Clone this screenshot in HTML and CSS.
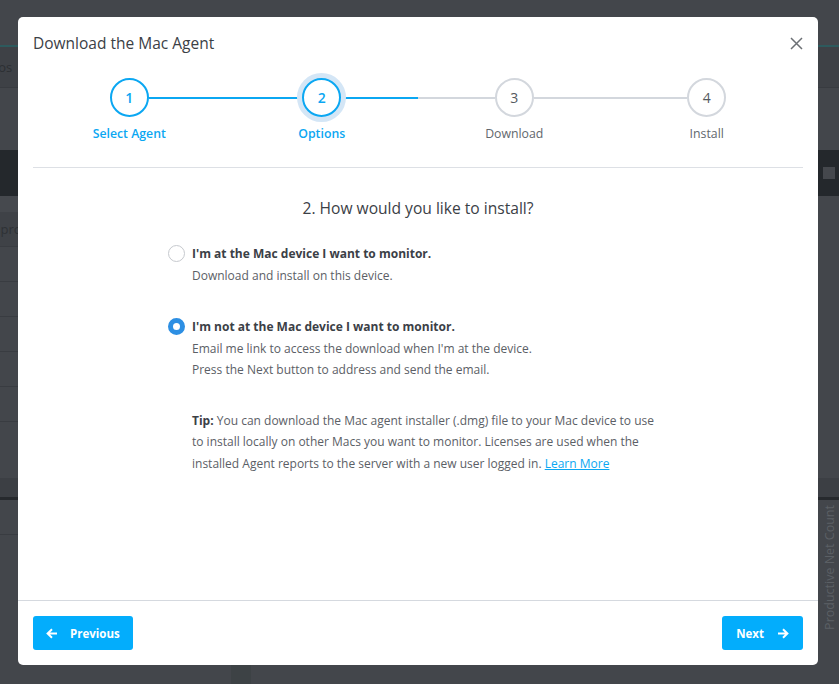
FILE: index.html
```html
<!DOCTYPE html>
<html lang="en">
<head>
<meta charset="UTF-8">
<title>Download the Mac Agent</title>
<link rel="stylesheet" href="styles.css">
</head>
<body>

<!-- page behind the dialog (dimmed) -->
<div class="app">
  <div class="app-header"></div>
  <div class="app-accent"></div>
  <div class="app-tabs"><span class="app-tab">Photos</span></div>
  <div class="app-gap"></div>
  <div class="app-band"><span class="app-band-box"></span></div>
  <div class="app-main">
    <div class="app-list">
      <div class="app-list-top"></div>
      <div class="app-list-title">Unproductive</div>
      <div class="app-row"></div>
      <div class="app-row"></div>
      <div class="app-row"></div>
      <div class="app-row"></div>
      <div class="app-row"></div>
    </div>
    <div class="app-side"></div>
  </div>
  <div class="app-sep"></div>
  <div class="app-foot">
    <div class="app-foot-list"><div class="app-row"></div></div>
    <div class="app-foot-col"></div>
    <div class="app-foot-main"></div>
    <div class="app-foot-axis"><span class="app-axis-label">Productive Net Count</span></div>
  </div>
</div>

<!-- dialog -->
<div class="modal">
  <div class="modal-header">
    <h2 class="modal-title">Download the Mac Agent</h2>
    <button class="modal-close" aria-label="Close">
      <svg width="13" height="13" viewBox="0 0 13 13"><path d="M1 1L12 12M12 1L1 12" stroke="#6c7075" stroke-width="1.5" fill="none"/></svg>
    </button>
  </div>

  <div class="stepper">
    <div class="step active">
      <div class="step-track"><span class="step-line none"></span><span class="step-num">1</span><span class="step-line on"></span></div>
      <div class="step-label">Select Agent</div>
    </div>
    <div class="step active current">
      <div class="step-track"><span class="step-line on"></span><span class="step-num">2</span><span class="step-line on"></span></div>
      <div class="step-label">Options</div>
    </div>
    <div class="step">
      <div class="step-track"><span class="step-line"></span><span class="step-num">3</span><span class="step-line"></span></div>
      <div class="step-label">Download</div>
    </div>
    <div class="step">
      <div class="step-track"><span class="step-line"></span><span class="step-num">4</span><span class="step-line none"></span></div>
      <div class="step-label">Install</div>
    </div>
  </div>

  <div class="modal-body">
    <h3 class="question">2. How would you like to install?</h3>
    <div class="options">
      <label class="option">
        <span class="radio"></span>
        <span class="option-text">
          <span class="option-title">I'm at the Mac device I want to monitor.</span>
          <span class="option-desc">Download and install on this device.</span>
        </span>
      </label>
      <label class="option">
        <span class="radio checked"></span>
        <span class="option-text">
          <span class="option-title">I'm not at the Mac device I want to monitor.</span>
          <span class="option-desc">Email me link to access the download when I'm at the device.</span>
          <span class="option-desc">Press the Next button to address and send the email.</span>
        </span>
      </label>
      <p class="tip"><b>Tip:</b> You can download the Mac agent installer (.dmg) file to your Mac device to use to install locally on other Macs you want to monitor. Licenses are used when the installed Agent reports to the server with a new user logged in. <a href="#">Learn More</a></p>
    </div>
  </div>

  <div class="modal-footer">
    <button class="btn">
      <svg width="12" height="11" viewBox="0 0 12 11"><path d="M11 5.5H1.8M6 1.2L1.6 5.5L6 9.8" stroke="#fff" stroke-width="2" fill="none"/></svg>
      Previous
    </button>
    <button class="btn btn-next">
      Next
      <svg width="12" height="11" viewBox="0 0 12 11"><path d="M1 5.5H10.2M6 1.2L10.4 5.5L6 9.8" stroke="#fff" stroke-width="2" fill="none"/></svg>
    </button>
  </div>
</div>

</body>
</html>
```

FILE: styles.css
```css
body {
  margin: 0;
  background-color: #43464b;
  font-family: "Open Sans", "Liberation Sans", sans-serif;
  overflow: hidden;
}

/* dimmed page behind */
.app {
  width: 839px;
  height: 684px;
  display: flex;
  flex-direction: column;
}

.app-header {
  height: 45px;
}

.app-accent {
  height: 2px;
  background-color: #2d5a5d;
}

.app-tabs {
  height: 40px;
  background-color: #3e4146;
  border-bottom: 1px solid #383b40;
  display: flex;
  align-items: center;
}

.app-tab {
  margin-left: -30px;
  font-size: 13px;
  color: #2c2f33;
}

.app-gap {
  height: 62px;
}

.app-band {
  height: 46px;
  background-color: #24282c;
  display: flex;
  justify-content: flex-end;
  align-items: center;
  padding-right: 4px;
}

.app-band-box {
  width: 12px;
  height: 12px;
  background-color: #45484d;
}

.app-main {
  height: 282px;
  display: flex;
}

.app-list {
  width: 231px;
}

.app-list-top {
  height: 16px;
  background-color: #46494e;
}

.app-list-title {
  height: 34px;
  line-height: 34px;
  background-color: #3f4247;
  font-size: 13px;
  color: #2e3135;
  text-indent: -17px;
  white-space: nowrap;
  overflow: hidden;
  border-bottom: 1px solid #393c41;
}

.app-row {
  height: 34px;
  border-bottom: 1px solid #393c41;
}

.app-side {
  flex: 1;
}

.app-sep {
  height: 19px;
  background-color: #3c3f44;
  border-bottom: 3px solid #26292d;
}

.app-foot {
  flex: 1;
  display: flex;
}

.app-foot-list {
  width: 231px;
}

.app-foot-col {
  width: 20px;
  background-color: #3d4245;
}

.app-foot-main {
  flex: 1;
}

.app-foot-axis {
  width: 21px;
  display: flex;
  align-items: flex-start;
  justify-content: flex-end;
  padding-right: 1px;
}

.app-axis-label {
  writing-mode: vertical-rl;
  transform: rotate(180deg);
  font-size: 12.5px;
  color: #5c6065;
  white-space: nowrap;
  margin-top: 5px;
}

/* dialog */
.modal {
  position: absolute;
  top: 17px;
  left: 18px;
  width: 800px;
  height: 648px;
  background-color: white;
  border-radius: 5px;
  display: flex;
  flex-direction: column;
}

.modal-header {
  display: flex;
  justify-content: space-between;
  align-items: center;
  padding: 15px 15px 0;
}

.modal-title {
  margin: 0;
  font-size: 15.5px;
  line-height: 22px;
  font-weight: 400;
  color: #3b4046;
}

.modal-close {
  border: 0;
  background: none;
  padding: 0;
  display: flex;
  cursor: pointer;
}

.stepper {
  display: grid;
  grid-template-columns: repeat(4, 1fr);
  margin: 24px 15px 0;
  padding-bottom: 24px;
  border-bottom: 1px solid #dde0e5;
}

.step {
  display: flex;
  flex-direction: column;
  align-items: center;
}

.step-track {
  display: flex;
  align-items: center;
  width: 100%;
}

.step-line {
  flex: 1;
  height: 2px;
  background-color: #d3d7dd;
}

.step-line.on {
  background-color: #0ba7f2;
}

.step-line.none {
  visibility: hidden;
}

.step-num {
  position: relative;
  z-index: 1;
  width: 39px;
  height: 39px;
  box-sizing: border-box;
  border: 2px solid #d3d7dd;
  border-radius: 50%;
  background-color: white;
  display: flex;
  align-items: center;
  justify-content: center;
  font-size: 14px;
  color: #555a60;
}

.step.active .step-num {
  border-color: #0ba7f2;
  color: #0ba7f2;
  font-weight: 600;
}

.step.current .step-num {
  box-shadow: 0 0 0 5px #d4e6f6;
}

.step-label {
  margin-top: 8px;
  font-size: 12.3px;
  line-height: 18px;
  color: #62676d;
}

.step.active .step-label {
  color: #0ba7f2;
  font-weight: 600;
}

.modal-body {
  flex: 1;
  padding-top: 29px;
}

.question {
  margin: 0;
  text-align: center;
  font-size: 15.6px;
  line-height: 22px;
  font-weight: 400;
  color: #3b4046;
}

.options {
  width: 500px;
  margin: 24px auto 0;
  font-size: 12px;
  line-height: 21.5px;
  color: #5b6066;
}

.option {
  display: flex;
}

.option + .option {
  margin-top: 30px;
}

.radio {
  flex: none;
  width: 17px;
  height: 17px;
  box-sizing: border-box;
  border: 1px solid #c6c9ce;
  border-radius: 50%;
  margin: 2px 7px 0 0;
}

.radio.checked {
  border: 5px solid #2d8fe3;
}

.option-title {
  display: block;
  font-weight: 700;
  color: #3b4046;
}

.option-desc {
  display: block;
}

.tip {
  margin: 29px 0 0 24px;
}

.tip b {
  color: #3b4046;
}

.tip a {
  color: #0ba7f2;
  text-decoration: underline;
}

.modal-footer {
  display: flex;
  justify-content: space-between;
  padding: 15px;
  border-top: 1px solid #d5d9df;
}

.btn {
  display: flex;
  align-items: center;
  gap: 12px;
  height: 34px;
  padding: 0 13px;
  border: 0;
  border-radius: 3px;
  background-color: #03adfc;
  color: white;
  font-family: "Open Sans", "Liberation Sans", sans-serif;
  font-size: 11.5px;
  font-weight: 700;
  cursor: pointer;
}

.btn-next {
  padding: 0 14px;
  gap: 13px;
}
```
